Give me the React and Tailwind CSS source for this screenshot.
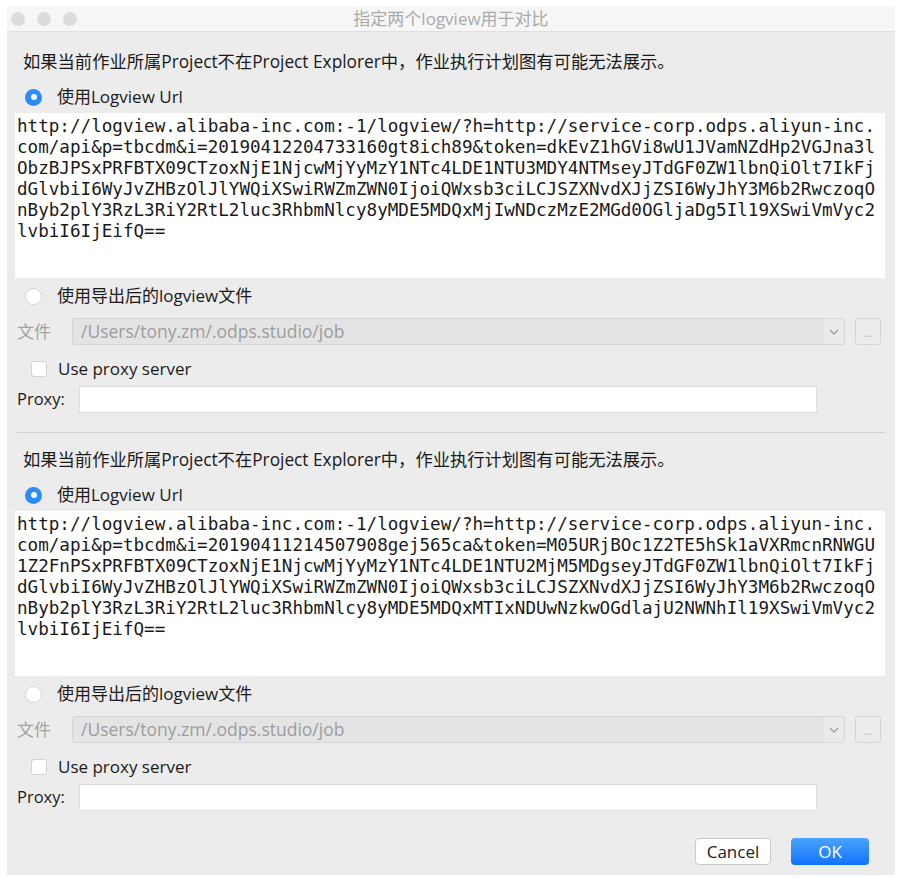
import React from 'react';

const ui = { fontFamily: '"Open Sans", "Noto Sans CJK SC", sans-serif' };
const mono = { fontFamily: '"DejaVu Sans Mono", monospace' };

const urlA = [
    'http://logview.alibaba-inc.com:-1/logview/?h=http://service-corp.odps.aliyun-inc.',
    'com/api&p=tbcdm&i=20190412204733160gt8ich89&token=dkEvZ1hGVi8wU1JVamNZdHp2VGJna3l',
    'ObzBJPSxPRFBTX09CTzoxNjE1NjcwMjYyMzY1NTc4LDE1NTU3MDY4NTMseyJTdGF0ZW1lbnQiOlt7IkFj',
    'dGlvbiI6WyJvZHBzOlJlYWQiXSwiRWZmZWN0IjoiQWxsb3ciLCJSZXNvdXJjZSI6WyJhY3M6b2RwczoqO',
    'nByb2plY3RzL3RiY2RtL2luc3RhbmNlcy8yMDE5MDQxMjIwNDczMzE2MGd0OGljaDg5Il19XSwiVmVyc2',
    'lvbiI6IjEifQ==',
];

const urlB = [
    'http://logview.alibaba-inc.com:-1/logview/?h=http://service-corp.odps.aliyun-inc.',
    'com/api&p=tbcdm&i=20190411214507908gej565ca&token=M05URjBOc1Z2TE5hSk1aVXRmcnRNWGU',
    '1Z2FnPSxPRFBTX09CTzoxNjE1NjcwMjYyMzY1NTc4LDE1NTU2MjM5MDgseyJTdGF0ZW1lbnQiOlt7IkFj',
    'dGlvbiI6WyJvZHBzOlJlYWQiXSwiRWZmZWN0IjoiQWxsb3ciLCJSZXNvdXJjZSI6WyJhY3M6b2RwczoqO',
    'nByb2plY3RzL3RiY2RtL2luc3RhbmNlcy8yMDE5MDQxMTIxNDUwNzkwOGdlajU2NWNhIl19XSwiVmVyc2',
    'lvbiI6IjEifQ==',
];

const Radio = ({ checked }) =>
    checked ? (
        <span className="w-[17px] h-[17px] rounded-full bg-[#2a8cfb] flex items-center justify-center shrink-0">
            <span className="w-[6px] h-[6px] rounded-full bg-white" />
        </span>
    ) : (
        <span className="w-[17px] h-[17px] rounded-full bg-white border border-[#d4d4d4] shrink-0" />
    );

// one logview block: description, url option, file option, proxy
const LogviewSection = ({ lines }) => (
    <div className="flex flex-col">
        <div className="h-[24px] pl-[16px] flex items-center text-[17.3px] text-[#1a1a1a] whitespace-nowrap">
            如果当前作业所属Project不在Project Explorer中，作业执行计划图有可能无法展示。
        </div>

        <div className="mt-[12px] h-[22px] pl-[18px] flex items-center gap-[15px] text-[17px] text-[#1a1a1a]">
            <Radio checked />
            <span>使用Logview Url</span>
        </div>

        <div
            className="mt-[5px] ml-[8px] mr-[10px] h-[165px] bg-white pt-[3px] pl-[2px] text-[17.6px] leading-[21px] text-[#1a1a1a] overflow-hidden"
            style={mono}
        >
            {lines.map((l, i) => (
                <div key={i} className="whitespace-pre">{l}</div>
            ))}
        </div>

        <div className="mt-[7px] h-[22px] pl-[18px] flex items-center gap-[15px] text-[17px] text-[#1a1a1a]">
            <Radio />
            <span>使用导出后的logview文件</span>
        </div>

        <div className="mt-[11px] h-[27px] pl-[10px] flex items-center">
            <span className="w-[55px] text-[17px] text-[#a3a3a3]">文件</span>
            <div className="w-[773px] h-[27px] flex bg-[#e4e4e4] border border-[#d6d6d6] rounded-[3px]">
                <div className="flex-1 flex items-center pl-[8px] text-[17.5px] text-[#9d9d9d]">
                    /Users/tony.zm/.odps.studio/job
                </div>
                <div className="w-[22px] flex items-center justify-center bg-[#eaeaea] border-l border-[#dadada] rounded-r-[3px]">
                    <svg width="10" height="6" viewBox="0 0 10 6">
                        <path d="M1 1l4 4 4-4" fill="none" stroke="#a0a0a0" strokeWidth="1.4" />
                    </svg>
                </div>
            </div>
            <div className="ml-[10px] w-[26px] h-[27px] flex items-end justify-center pb-[6px] bg-[#ececec] border border-[#d6d6d6] rounded-[3px] text-[11px] leading-none text-[#a8a8a8]">
                ...
            </div>
        </div>

        <div className="mt-[13px] h-[22px] pl-[24px] flex items-center gap-[11px] text-[17px] text-[#1a1a1a]">
            <span className="w-[16px] h-[16px] bg-white border border-[#d4d4d4] rounded-[3px] shrink-0" />
            <span>Use proxy server</span>
        </div>

        <div className="mt-[6px] h-[27px] pl-[10px] flex items-center">
            <span className="w-[62px] text-[16.5px] text-[#1a1a1a]">Proxy:</span>
            <div className="w-[738px] h-[27px] bg-white border border-[#dedede]" />
        </div>
    </div>
);

export default function App() {
    return (
        <div className="w-[900px] h-[878px] bg-white pt-[6px] pl-[7px]" style={ui}>
            <div className="w-[888px] h-[869px] bg-[#ececec] flex flex-col">
                <div className="h-[26px] bg-[#f6f6f6] border-b border-[#e0e0e0] flex items-center relative">
                    <div className="flex gap-[12px] pl-[4px]">
                        <span className="w-[14px] h-[14px] rounded-full bg-[#dcdcdc]" />
                        <span className="w-[14px] h-[14px] rounded-full bg-[#dcdcdc]" />
                        <span className="w-[14px] h-[14px] rounded-full bg-[#dcdcdc]" />
                    </div>
                    <div className="absolute inset-0 flex items-center justify-center text-[17px] text-[#aaaaaa]">
                        指定两个logview用于对比
                    </div>
                </div>

                <div className="mt-[18px]">
                    <LogviewSection lines={urlA} />
                </div>

                <div className="mt-[19px] mx-[10px] h-px bg-[#d2d2d2]" />

                <div className="mt-[15px]">
                    <LogviewSection lines={urlB} />
                </div>

                <div className="mt-[27px] flex justify-end gap-[20px] pr-[26px]">
                    <button className="w-[76px] h-[27px] bg-white border border-[#cacaca] rounded-[4px] text-[17px] text-[#222]">
                        Cancel
                    </button>
                    <button className="w-[78px] h-[27px] bg-gradient-to-b from-[#4aa3fd] to-[#0c72fb] rounded-[4px] text-[17px] text-white">
                        OK
                    </button>
                </div>
            </div>
        </div>
    );
}
